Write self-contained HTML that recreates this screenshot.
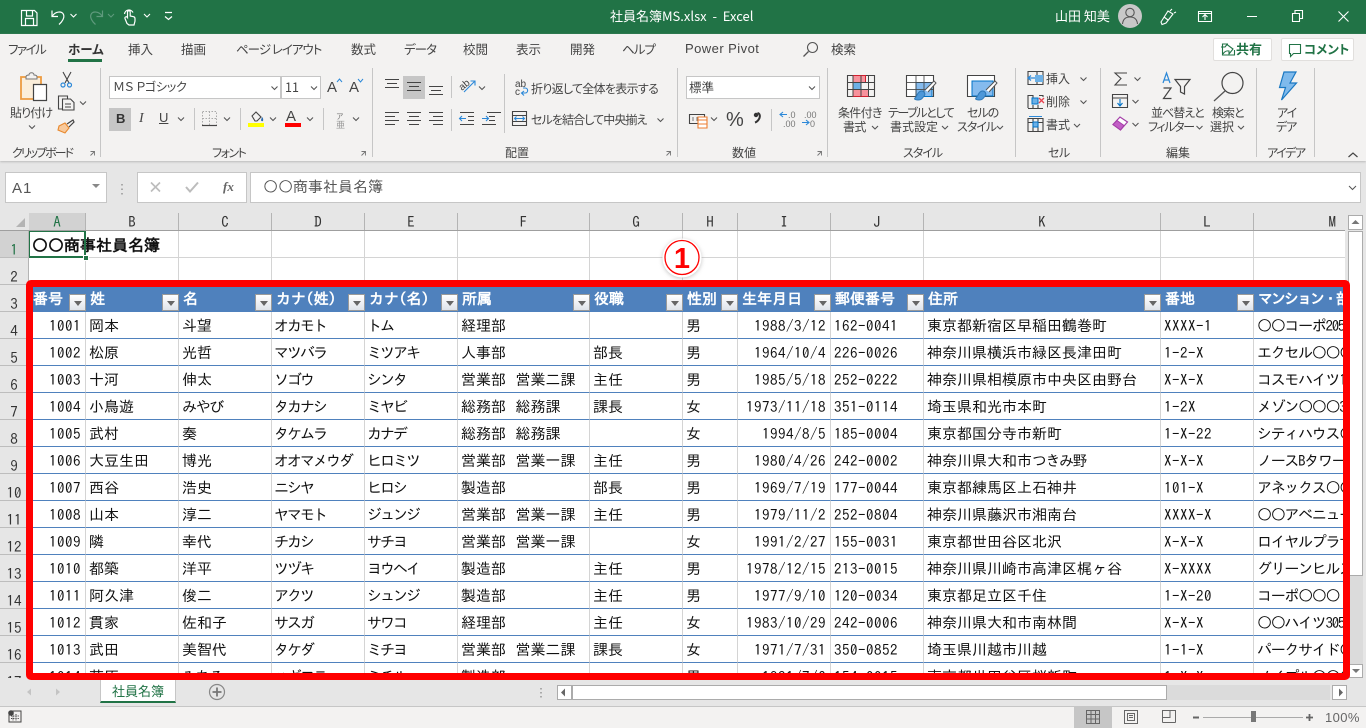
<!DOCTYPE html>
<html lang="ja"><head><meta charset="utf-8"><title>社員名簿MS.xlsx - Excel</title>
<style>
html,body{margin:0;padding:0;width:1366px;height:728px;overflow:hidden;background:#e6e6e6}
*{box-sizing:border-box}
body{position:relative;font-family:"Noto Sans CJK JP","Liberation Sans",sans-serif}
.b{position:absolute}
.t{position:absolute;white-space:nowrap;font-size:12px;line-height:16px;color:#444;font-feature-settings:"palt"}
.w{color:#fff}
.g{color:#555}
.c{text-align:center}
.s{position:absolute;width:1px;background:#c6c6c6}
.ch{position:absolute;top:213px;height:18px;font:15px/18px "IPAGothic",monospace;color:#333;text-align:center;border-right:1px solid #b4b4b4}
.rh{position:absolute;left:0;width:29px;height:27px;font:15px/17px "IPAGothic",monospace;color:#333;text-align:center;border-bottom:1px solid #bdbdbd;padding-top:10px;border-right:1px solid #b4b4b4}
#grid{position:absolute;left:29px;top:231px;width:1316px;height:447px;overflow:hidden;background:#fff}
table{border-collapse:separate;border-spacing:0;table-layout:fixed;width:1317px;font:15px/24px "IPAGothic",monospace;color:#111}
td{height:27px;padding:2px 3px 0;border-right:1px solid #d4d4d4;border-bottom:1px solid #d4d4d4;overflow:hidden;white-space:nowrap;position:relative;vertical-align:top}
tr.d td{border-bottom-color:#4f81bd}
tr.h td{background:#4f81bd;color:#fff;font-weight:bold;border-right:0;border-bottom:0;line-height:26px;padding:1px 3px 0 4px}
tr.h td i{position:absolute;right:0;bottom:1px;width:17px;height:17px;background:linear-gradient(#fff,#dfe3ea);border:1px solid #9a9a9a}
tr.h td i:after{content:"";position:absolute;left:4px;top:6px;border:4px solid transparent;border-top:5px solid #666;border-bottom:0}
.r{text-align:right;padding-right:4px;letter-spacing:.5px}
.z{letter-spacing:.5px}
.k{letter-spacing:-2px;padding-left:2px}
.m{letter-spacing:-1.3px}
tr.h td.y{letter-spacing:-2px}
.n{word-spacing:2px}
</style></head><body>

<!-- title bar -->
<div class="b" style="left:0;top:0;width:1366px;height:34px;background:#217346"></div>
<!-- ribbon -->
<div class="b" style="left:0;top:34px;width:1366px;height:127px;background:#f3f2f1;box-shadow:0 1px 2px #bbb"></div>

<div class="t w" style="left:610px;top:8px;font-size:13px;letter-spacing:0">社員名簿MS.xlsx&nbsp; -&nbsp; Excel</div>
<div class="t w" style="left:1055px;top:8px;font-size:13px">山田 知美</div>

<!-- tabs -->
<div class="t" style="left:8px;top:41px;font-size:12.5px;letter-spacing:-1.5px">ファイル</div>
<div class="t" style="left:68px;top:41px;font-size:12.5px;font-weight:bold;color:#333">ホーム</div>
<div class="b" style="left:68px;top:59px;width:34px;height:3px;background:#217346"></div>
<div class="t" style="left:128px;top:41px;font-size:12.5px">挿入</div>
<div class="t" style="left:181px;top:41px;font-size:12.5px">描画</div>
<div class="t" style="left:236px;top:41px;font-size:12.5px;letter-spacing:-1px">ページ レイアウト</div>
<div class="t" style="left:351px;top:41px;font-size:12.5px">数式</div>
<div class="t" style="left:404px;top:41px;font-size:12.5px;letter-spacing:-1px">データ</div>
<div class="t" style="left:463px;top:41px;font-size:12.5px">校閲</div>
<div class="t" style="left:516px;top:41px;font-size:12.5px">表示</div>
<div class="t" style="left:570px;top:41px;font-size:12.5px">開発</div>
<div class="t" style="left:622px;top:41px;font-size:12.5px;letter-spacing:-1px">ヘルプ</div>
<div class="t" style="left:685px;top:41px;font:13px/16px 'Liberation Sans',sans-serif;letter-spacing:.45px;color:#444">Power Pivot</div>
<div class="t" style="left:831px;top:41px;font-size:12.5px">検索</div>

<div class="b" style="left:1213px;top:38px;width:59px;height:23px;background:#fff;border:1px solid #e1dfdd;border-radius:2px"></div>
<div class="t" style="left:1236px;top:41px;font-size:13px;font-weight:bold;color:#217346">共有</div>
<div class="b" style="left:1281px;top:38px;width:73px;height:23px;background:#fff;border:1px solid #e1dfdd;border-radius:2px"></div>
<div class="t" style="left:1304px;top:41px;font-size:12.5px;font-weight:bold;color:#217346">コメント</div>

<!-- group separators -->
<div class="s" style="left:100px;top:68px;height:89px"></div>
<div class="s" style="left:372px;top:68px;height:89px"></div>
<div class="s" style="left:677px;top:68px;height:89px"></div>
<div class="s" style="left:827px;top:68px;height:89px"></div>
<div class="s" style="left:1015px;top:68px;height:89px"></div>
<div class="s" style="left:1100px;top:68px;height:89px"></div>
<div class="s" style="left:1256px;top:68px;height:89px"></div>
<div class="s" style="left:1314px;top:68px;height:89px"></div>
<div class="s" style="left:194px;top:108px;height:22px"></div>
<div class="s" style="left:240px;top:108px;height:22px"></div>
<div class="s" style="left:323px;top:108px;height:22px"></div>
<div class="s" style="left:451px;top:76px;height:22px"></div>
<div class="s" style="left:451px;top:109px;height:22px"></div>
<div class="s" style="left:504px;top:74px;height:59px"></div>
<div class="s" style="left:771px;top:109px;height:22px"></div>

<!-- group labels -->
<div class="t" style="left:12px;top:145px;letter-spacing:-2px">クリップボード</div>
<div class="t" style="left:212px;top:145px;letter-spacing:-1.5px">フォント</div>
<div class="t" style="left:505px;top:145px">配置</div>
<div class="t" style="left:732px;top:145px">数値</div>
<div class="t" style="left:903px;top:145px;letter-spacing:-1px">スタイル</div>
<div class="t" style="left:1048px;top:145px;letter-spacing:-.5px">セル</div>
<div class="t" style="left:1166px;top:145px">編集</div>
<div class="t" style="left:1267px;top:145px;letter-spacing:-1.5px">アイデア</div>

<!-- clipboard label -->
<div class="t" style="left:10px;top:105px;letter-spacing:-.9px">貼り付け</div>

<!-- font controls -->
<div class="b" style="left:109px;top:76px;width:172px;height:23px;background:#fff;border:1px solid #c6c6c6"></div>
<div class="b" style="left:281px;top:76px;width:40px;height:23px;background:#fff;border:1px solid #c6c6c6"></div>
<div class="t" style="left:113px;top:79px;font-size:12px;color:#444;letter-spacing:-.2px">ＭＳ Ｐゴシック</div>
<div class="t" style="left:285px;top:79px;font-size:12.5px">11</div>
<div class="b" style="left:109px;top:108px;width:22px;height:23px;background:#c6c6c6"></div>
<div class="t" style="left:116px;top:111px;font:bold 13px/16px 'Liberation Sans',sans-serif;color:#333">B</div>
<div class="t" style="left:139px;top:111px;font:italic 14px/16px 'Liberation Serif',serif;color:#444">I</div>
<div class="t" style="left:159px;top:110px;font:13px/16px 'Liberation Sans',sans-serif;color:#444;text-decoration:underline">U</div>
<div class="t" style="left:327px;top:79px;font:15px/18px 'Liberation Sans',sans-serif;color:#444">A</div>
<div class="t" style="left:349px;top:79px;font:15px/18px 'Liberation Sans',sans-serif;color:#444">A</div>
<div class="t" style="left:286px;top:108px;font:15px/18px 'Liberation Sans',sans-serif;color:#444">A</div>

<!-- alignment labels -->
<div class="b" style="left:403px;top:76px;width:22px;height:23px;background:#c6c6c6"></div>
<div class="t" style="left:531px;top:81px;font-size:12px;letter-spacing:-.7px">折り返して全体を表示する</div>
<div class="t" style="left:531px;top:112px;font-size:12px;letter-spacing:-.9px">セルを結合して中央揃え</div>

<!-- number -->
<div class="b" style="left:686px;top:76px;width:134px;height:23px;background:#fff;border:1px solid #c6c6c6"></div>
<div class="t" style="left:689px;top:79px;font-size:12.5px">標準</div>
<div class="t" style="left:726px;top:108px;font:20px/24px 'Liberation Sans',sans-serif;color:#444">%</div>

<!-- styles labels -->
<div class="t" style="left:838px;top:105px;letter-spacing:-.7px">条件付き</div>
<div class="t" style="left:843px;top:119px;letter-spacing:-.6px">書式</div>
<div class="t" style="left:888px;top:105px;letter-spacing:-1.4px">テーブルとして</div>
<div class="t" style="left:890px;top:119px">書式設定</div>
<div class="t" style="left:967px;top:105px;letter-spacing:-1px">セルの</div>
<div class="t" style="left:957px;top:119px;letter-spacing:-1px">スタイル</div>

<!-- cells labels -->
<div class="t" style="left:1046px;top:71px">挿入</div>
<div class="t" style="left:1046px;top:94px">削除</div>
<div class="t" style="left:1046px;top:117px">書式</div>

<!-- editing labels -->
<div class="t" style="left:1151px;top:105px;letter-spacing:-1px">並べ替えと</div>
<div class="t" style="left:1148px;top:119px;letter-spacing:-1.4px">フィルター</div>
<div class="t" style="left:1212px;top:105px;letter-spacing:-1px">検索と</div>
<div class="t" style="left:1210px;top:119px">選択</div>
<div class="t" style="left:1277px;top:105px;letter-spacing:-1px">アイ</div>
<div class="t" style="left:1276px;top:119px;letter-spacing:-1px">デア</div>

<!-- formula bar -->
<div class="b" style="left:5px;top:172px;width:102px;height:31px;background:#fff;border:1px solid #c6c6c6"></div>
<div class="t" style="left:12px;top:180px;font:15px/18px 'Liberation Sans',sans-serif;color:#555;letter-spacing:1px">A1</div>
<div class="b" style="left:137px;top:172px;width:110px;height:31px;background:#fff;border:1px solid #c6c6c6"></div>
<div class="b" style="left:250px;top:172px;width:1111px;height:31px;background:#fff;border:1px solid #c6c6c6"></div>
<div class="t" style="left:263px;top:178px;font:15px/18px 'IPAGothic',monospace;color:#555">○○商事社員名簿</div>
<div class="t" style="left:223px;top:178px;font:italic bold 13px/18px 'Liberation Serif',serif;color:#666">fx</div>

<!-- column headers -->
<div class="b" style="left:0;top:213px;width:1345px;height:18px;background:#e6e6e6"></div>
<div class="ch" style="left:29px;width:57px;background:#d2d2d2;color:#217346">A</div>
<div class="ch" style="left:86px;width:93px">B</div>
<div class="ch" style="left:179px;width:93px">C</div>
<div class="ch" style="left:272px;width:93px">D</div>
<div class="ch" style="left:365px;width:93px">E</div>
<div class="ch" style="left:458px;width:132px">F</div>
<div class="ch" style="left:590px;width:93px">G</div>
<div class="ch" style="left:683px;width:55px">H</div>
<div class="ch" style="left:738px;width:93px">I</div>
<div class="ch" style="left:831px;width:93px">J</div>
<div class="ch" style="left:924px;width:237px">K</div>
<div class="ch" style="left:1161px;width:93px">L</div>
<div class="ch" style="left:1254px;width:91px;border-right:0;text-align:right;padding-right:9px">M</div>
<div class="b" style="left:0;top:230px;width:1345px;height:1px;background:#9f9f9f"></div>

<!-- row headers -->
<div class="rh" style="top:231px;background:#d2d2d2;color:#217346">1</div>
<div class="rh" style="top:258px">2</div>
<div class="rh" style="top:285px">3</div>
<div class="rh" style="top:312px">4</div>
<div class="rh" style="top:339px">5</div>
<div class="rh" style="top:366px">6</div>
<div class="rh" style="top:393px">7</div>
<div class="rh" style="top:420px">8</div>
<div class="rh" style="top:447px">9</div>
<div class="rh" style="top:474px">10</div>
<div class="rh" style="top:501px">11</div>
<div class="rh" style="top:528px">12</div>
<div class="rh" style="top:555px">13</div>
<div class="rh" style="top:582px">14</div>
<div class="rh" style="top:609px">15</div>
<div class="rh" style="top:636px">16</div>
<div class="b" style="left:0;top:663px;width:29px;height:15px;border-right:1px solid #b4b4b4;overflow:hidden;font:15px/17px 'IPAGothic',monospace;color:#333;text-align:center;padding-top:10px">17</div>

<!-- grid -->
<div id="grid">
<table>
<colgroup><col style="width:57px"><col style="width:93px"><col style="width:93px"><col style="width:93px"><col style="width:93px"><col style="width:132px"><col style="width:93px"><col style="width:55px"><col style="width:93px"><col style="width:93px"><col style="width:237px"><col style="width:93px"><col style="width:92px"></colgroup>
<tr><td></td><td></td><td></td><td></td><td></td><td></td><td></td><td></td><td></td><td></td><td></td><td></td><td></td></tr>
<tr><td></td><td></td><td></td><td></td><td></td><td></td><td></td><td></td><td></td><td></td><td></td><td></td><td></td></tr>
<tr class="h"><td>番号<i></i></td><td>姓<i></i></td><td>名<i></i></td><td>カナ(姓)<i></i></td><td>カナ(名)<i></i></td><td>所属<i></i></td><td>役職<i></i></td><td>性別<i></i></td><td>生年月日<i></i></td><td>郵便番号<i></i></td><td>住所<i></i></td><td>番地<i></i></td><td class="y">マンション・部</td></tr>
<tr class="d"><td class="r">1001</td><td>岡本</td><td>斗望</td><td class="k">オカモト</td><td class="k">トム</td><td>経理部</td><td></td><td>男</td><td class="r">1988/3/12</td><td class="z">162-0041</td><td>東京都新宿区早稲田鶴巻町</td><td class="z">XXXX-1</td><td class="m">○○コーポ205</td></tr>
<tr class="d"><td class="r">1002</td><td>松原</td><td>光哲</td><td class="k">マツバラ</td><td class="k">ミツアキ</td><td>人事部</td><td>部長</td><td>男</td><td class="r">1964/10/4</td><td class="z">226-0026</td><td>神奈川県横浜市緑区長津田町</td><td class="z">1-2-X</td><td class="m">エクセル○○○</td></tr>
<tr class="d"><td class="r">1003</td><td>十河</td><td>伸太</td><td class="k">ソゴウ</td><td class="k">シンタ</td><td class="n">営業部 営業二課</td><td>主任</td><td>男</td><td class="r">1985/5/18</td><td class="z">252-0222</td><td>神奈川県相模原市中央区由野台</td><td class="z">X-X-X</td><td class="m">コスモハイツ1</td></tr>
<tr class="d"><td class="r">1004</td><td>小鳥遊</td><td class="m">みやび</td><td class="k">タカナシ</td><td class="k">ミヤビ</td><td class="n">総務部 総務課</td><td>課長</td><td>女</td><td class="r">1973/11/18</td><td class="z">351-0114</td><td>埼玉県和光市本町</td><td class="z">1-2X</td><td class="m">メゾン○○○3</td></tr>
<tr class="d"><td class="r">1005</td><td>武村</td><td>奏</td><td class="k">タケムラ</td><td class="k">カナデ</td><td class="n">総務部 総務課</td><td></td><td>女</td><td class="r">1994/8/5</td><td class="z">185-0004</td><td>東京都国分寺市新町</td><td class="z">1-X-22</td><td class="m">シティハウス○</td></tr>
<tr class="d"><td class="r">1006</td><td>大豆生田</td><td>博光</td><td class="k">オオマメウダ</td><td class="k">ヒロミツ</td><td class="n">営業部 営業一課</td><td>主任</td><td>男</td><td class="r">1980/4/26</td><td class="z">242-0002</td><td>神奈川県大和市<span style="letter-spacing:-1.5px">つきみ</span>野</td><td class="z">X-X-X</td><td class="m">ノースBタワー</td></tr>
<tr class="d"><td class="r">1007</td><td>西谷</td><td>浩史</td><td class="k">ニシヤ</td><td class="k">ヒロシ</td><td>製造部</td><td>部長</td><td>男</td><td class="r">1969/7/19</td><td class="z">177-0044</td><td>東京都練馬区上石神井</td><td class="z">101-X</td><td class="m">アネックス○○</td></tr>
<tr class="d"><td class="r">1008</td><td>山本</td><td>淳二</td><td class="k">ヤマモト</td><td class="k">ジュンジ</td><td class="n">営業部 営業一課</td><td>主任</td><td>男</td><td class="r">1979/11/2</td><td class="z">252-0804</td><td>神奈川県藤沢市湘南台</td><td class="z">XXXX-X</td><td class="m">○○アベニュー</td></tr>
<tr class="d"><td class="r">1009</td><td>隣</td><td>幸代</td><td class="k">チカシ</td><td class="k">サチヨ</td><td class="n">営業部 営業一課</td><td></td><td>女</td><td class="r">1991/2/27</td><td class="z">155-0031</td><td>東京都世田谷区北沢</td><td class="z">X-X-X</td><td class="m">ロイヤルプラザ</td></tr>
<tr class="d"><td class="r">1010</td><td>都築</td><td>洋平</td><td class="k">ツヅキ</td><td class="k">ヨウヘイ</td><td>製造部</td><td>主任</td><td>男</td><td class="r">1978/12/15</td><td class="z">213-0015</td><td>神奈川県川崎市高津区梶ヶ谷</td><td class="z">X-XXXX</td><td class="m">グリーンヒルズ</td></tr>
<tr class="d"><td class="r">1011</td><td>阿久津</td><td>俊二</td><td class="k">アクツ</td><td class="k">シュンジ</td><td>製造部</td><td>主任</td><td>男</td><td class="r">1977/9/10</td><td class="z">120-0034</td><td>東京都足立区千住</td><td class="z">1-X-20</td><td class="m">コーポ○○○</td></tr>
<tr class="d"><td class="r">1012</td><td>貫家</td><td>佐和子</td><td class="k">サスガ</td><td class="k">サワコ</td><td>経理部</td><td>主任</td><td>女</td><td class="r">1983/10/29</td><td class="z">242-0006</td><td>神奈川県大和市南林間</td><td class="z">X-X-X</td><td class="m">○○ハイツ305</td></tr>
<tr class="d"><td class="r">1013</td><td>武田</td><td>美智代</td><td class="k">タケダ</td><td class="k">ミチヨ</td><td class="n">営業部 営業二課</td><td>課長</td><td>女</td><td class="r">1971/7/31</td><td class="z">350-0852</td><td>埼玉県川越市川越</td><td class="z">1-1-X</td><td class="m">パークサイド○</td></tr>
<tr class="d"><td class="r">1014</td><td>荻原</td><td class="m">みちる</td><td class="k">ハギワラ</td><td class="k">ミチル</td><td>製造部</td><td></td><td>男</td><td class="r">1981/7/6</td><td class="z">154-0015</td><td>東京都世田谷区桜新町</td><td class="z">1-X-X</td><td class="m">メイプル○○○</td></tr>
</table>
<div class="t" style="left:3px;top:5px;font:bold 16px/18px 'IPAGothic',monospace;color:#111">○○商事社員名簿</div>
<div class="b" style="left:-1px;top:-1px;width:58px;height:28px;border:2px solid #217346"></div>
<div class="b" style="left:54px;top:24px;width:6px;height:6px;background:#217346;border:1px solid #fff"></div>
</div>

<!-- vertical scrollbar -->
<div class="b" style="left:1348px;top:215px;width:15px;height:15px;background:#fff;border:1px solid #ababab"></div>
<div class="b" style="left:1348px;top:231px;width:15px;height:345px;background:#fff;border:1px solid #ababab"></div>
<div class="b" style="left:1349px;top:576px;width:14px;height:88px;background:#dbdbdb"></div>
<div class="b" style="left:1349px;top:664px;width:14px;height:14px;background:#fff;border:1px solid #ababab"></div>

<!-- sheet tabs bar -->
<div class="b" style="left:0;top:678px;width:1366px;height:28px;background:#e6e6e6"></div>
<div class="b" style="left:100px;top:678px;width:76px;height:25px;background:#fff;border:1px solid #c6c6c6;border-top:0;border-bottom:2px solid #217346"></div>
<div class="t" style="left:112px;top:683px;font:13px/16px 'Noto Sans CJK JP',sans-serif;color:#217346;font-feature-settings:normal">社員名簿</div>
<div class="b" style="left:557px;top:685px;width:15px;height:15px;background:#fff;border:1px solid #ababab"></div>
<div class="b" style="left:572px;top:685px;width:595px;height:15px;background:#fff;border:1px solid #ababab"></div>
<div class="b" style="left:1167px;top:685px;width:163px;height:15px;background:#dbdbdb"></div>
<div class="b" style="left:1332px;top:685px;width:15px;height:15px;background:#fff;border:1px solid #ababab"></div>

<!-- status bar -->
<div class="b" style="left:0;top:706px;width:1366px;height:22px;background:#f3f2f1;border-top:1px solid #c6c6c6"></div>
<div class="b" style="left:1074px;top:707px;width:38px;height:21px;background:#c6c6c6"></div>
<div class="t" style="left:1325px;top:709px;font:13px/18px 'Liberation Sans',sans-serif;color:#666;letter-spacing:.4px">100%</div>

<!-- icons -->
<svg class="b" style="left:0;top:0" width="1366" height="728" viewBox="0 0 1366 728" fill="none">
<defs>
<path id="ch" d="M-3-1.5l3 3 3-3" stroke="#555" stroke-width="1.1"/>
<path id="cw" d="M-3-1.5l3 3 3-3" stroke="#fff" stroke-width="1.1"/>
<path id="la" d="M.5.5h4v4M4.500.5l-4 4" stroke="#777" stroke-width=".9"/>
</defs>
<!-- QAT -->
<g stroke="#fff" stroke-width="1.2">
<path d="M21.500 10.500h13l2.500 2.500v12.500h-15.500z"/><path d="M26.500 10.500v5.500h6v-5.500M25.500 25.500v-7h8v7"/>
<path d="M52 10.500v6h6M52.500 16c3-5 9.500-5 11-1.500 1.200 3-1 7-4.500 10"/>
<path d="M124.500 14a4.500 4.500 0 0 1 8.500-1.500M127 23.500l-2-5c-.5-1.500 1.500-2.500 2.500-1V12c0-1.700 2.700-1.700 2.700 0v4l3.300.7c1 .2 1.500 1 1.500 2v2.300l-1 4h-5z"/>
<path d="M165 12.500h7M165 16.500l3.500 3 3.500-3"/>
</g>
<path d="M102.500 10.500v6h-6M102 16c-3-5-9.500-5-11-1.500-1.200 3 1 7 4.500 10" stroke="#5f9a7d" stroke-width="1.200"/>
<use href="#cw" x="73.500" y="15.500"/><use href="#cw" x="147" y="15.500"/>
<path d="M108 14l3 3 3-3" stroke="#5f9a7d"/>
<!-- window controls -->
<circle cx="1130" cy="16" r="12" fill="#c8c8c8"/>
<circle cx="1130" cy="12.500" r="4.200" stroke="#555" stroke-width="1.100"/><path d="M1122.500 24c.5-5 3-7 7.500-7s7 2 7.500 7" stroke="#555" stroke-width="1.100"/>
<g stroke="#fff" stroke-width="1.100">
<path d="M1161 22l7-11 5 3-7 9-4 1.500zM1170 11l2-2M1174 13l2-1M1164 17l4 3"/>
<path d="M1198.500 11.500h13v10h-13zM1198.500 13.500h13M1205 20v-5M1202.500 17l2.500-2.500 2.500 2.500"/>
<path d="M1247 16.500h10M1292.500 13.500h7v8h-7zM1295 13v-2.500h7.500v8h-3M1338.500 11.500l10 10M1348.500 11.500l-10 10"/>
</g>
<!-- tabs search -->
<circle cx="812.500" cy="47.500" r="5" stroke="#555" stroke-width="1.100"/><path d="M808.500 51.500l-5 5" stroke="#555" stroke-width="1.300"/>
<path d="M1221 47h4l2-2.500 6 4.500-4 5v-3c-3-.5-4.500.5-6 3M1228 44h-5.500v11h12v-5" stroke="#217346" stroke-width="1.100"/>
<path d="M1289.500 44.500h11v9h-7l-3 3v-3h-1z" stroke="#217346" stroke-width="1.100"/>
<!-- clipboard group -->
<path d="M21 77h20v22H21z" fill="#fbeeda" stroke="#ed9b40" stroke-width="1.800"/>
<path d="M26 77c0-2 2-2 3-2 0-3 5-3 5 0 1 0 3 0 3 2v2H26z" fill="#f3f2f1" stroke="#777"/>
<path d="M33.500 84.500h13v16h-13z" fill="#fff" stroke="#444" stroke-width="1.200"/>
<use href="#ch" x="32" y="127"/>
<path d="M63 72l6 11M71 72l-6 11" stroke="#444" stroke-width="1.100"/><circle cx="63" cy="85" r="2" stroke="#2b88d8" stroke-width="1.200"/><circle cx="69.500" cy="85" r="2" stroke="#2b88d8" stroke-width="1.200"/>
<path d="M58.500 96h9v13h-9z" stroke="#444" stroke-width="1.100"/><path d="M62.500 99h8l3.500 3.500V110h-11.500z" fill="#f3f2f1" stroke="#444" stroke-width="1.100"/><path d="M65 104h6M65 107h6" stroke="#444"/>
<use href="#ch" x="83" y="103"/>
<path d="M59 126l6-3 4 5-4 5-7-3z" fill="#f8c99b" stroke="#e8892f" stroke-width="1.100"/><path d="M67 124l6-4 1 2-5 5" stroke="#444" stroke-width="1.200"/>
<use href="#la" x="90" y="151"/><use href="#la" x="361" y="151"/><use href="#la" x="666" y="151"/><use href="#la" x="817" y="151"/>
<!-- font controls -->
<use href="#ch" x="274.500" y="88"/><use href="#ch" x="314" y="88"/>
<path d="M337 83l2.500-3 2.500 3" stroke="#2b88d8" transform="translate(0 -1)"/><path d="M358 79l2.500 3 2.500-3" stroke="#2b88d8"/>
<use href="#ch" x="181" y="119"/><use href="#ch" x="227" y="119"/><use href="#ch" x="273" y="119"/><use href="#ch" x="310" y="119"/><use href="#ch" x="356" y="119"/>
<path d="M202.500 111.500h14v14h-14zM209.500 111.500v14M202.500 118.500h14" stroke="#aaa" stroke-dasharray="1.500 1.500"/><path d="M202 125.500h15" stroke="#444" stroke-width="1.200"/>
<path d="M252 116l4-4 5 5-4 4h-2z" stroke="#444" stroke-width="1.100"/><path d="M262 117c1 1 1.500 2 1 4-1 .5-2 0-2-1z" fill="#2b6cb0"/>
<path d="M248 123h16v4h-16z" fill="#ffff00"/>
<path d="M285 123h16v4h-16z" fill="#ff0000"/>
<text x="336" y="119" font-family="Noto Sans CJK JP" font-size="7.500" fill="#777">ア</text>
<text x="336" y="128" font-family="Noto Sans CJK JP" font-size="9" fill="#999">亜</text>
<!-- alignment -->
<g stroke="#444" stroke-width="1.100">
<path d="M385 79.500h14M387 83.500h10M385 87.500h14"/>
<path d="M407 82.500h14M409 86.500h10M407 90.500h14"/>
<path d="M429 86.500h14M431 90.500h10M429 94.500h14"/>
<path d="M385 112.500h14M385 116.500h10M385 120.500h14M385 124.500h10"/>
<path d="M407 112.500h14M409 116.500h10M407 120.500h14M409 124.500h10"/>
<path d="M429 112.500h14M433 116.500h10M429 120.500h14M433 124.500h10"/>
<path d="M460 112.500h14M468 116.500h6M468 120.500h6M460 124.500h14M487 112.500h14M482 124.500h14M489 116.500h6M489 120.500h6"/>
</g>
<path d="M460 118.500h6M462 116l-2.500 2.500 2.500 2.500M482 118.500h6M486 116l2.500 2.500-2.500 2.500" stroke="#2b88d8" stroke-width="1.100"/>
<text transform="translate(462 91) rotate(-40)" font-family="Liberation Sans" font-size="10" fill="#444">ab</text>
<path d="M464 92l11-11M470.500 81h4.500v4.500" stroke="#2b88d8" stroke-width="1.100"/>
<use href="#ch" x="482" y="88"/>
<!-- wrap / merge -->
<text x="515" y="87" font-family="Liberation Sans" font-size="10" fill="#444">ab</text>
<text x="515" y="95" font-family="Liberation Sans" font-size="10" fill="#444">c</text>
<path d="M522 93h3c3.500 0 3.500-5 0-5h-2M524 91l-2.500 2 2.500 2.500" stroke="#2b88d8" stroke-width="1.100"/>
<path d="M512.500 111.500h14v14h-14zM512.500 115.500h14M512.500 121.500h14" stroke="#444" stroke-width="1.100"/>
<path d="M514.500 118.500h10M516.500 116.500l-2 2 2 2M522.500 116.500l2 2-2 2" stroke="#2b88d8"/>
<use href="#ch" x="660.500" y="120"/>
<!-- number -->
<use href="#ch" x="812" y="88"/><use href="#ch" x="714" y="119"/>
<path d="M689.500 114.500h15v9h-15z" stroke="#444" stroke-width="1.100"/>
<path d="M693 117v4M697 117v4" stroke="#777"/>
<path d="M698 117h9v11h-9z" fill="#fff" stroke="#ed7d31" stroke-width="1.100"/><path d="M698 120h9M698 124h9" stroke="#ed7d31"/>
<path d="M757.500 113c2.500.5 3 3.500 1.500 6-1 1.800-2.500 3-4 3.500" stroke="#333" stroke-width="2"/><circle cx="756" cy="115" r="2.200" fill="#333"/>
<path d="M780 114.500h7M783 112l-3 2.500 3 2.500M802 122.500h7M806 120l3 2.500-3 2.500" stroke="#2b88d8" stroke-width="1.100"/>
<g font-family="Liberation Sans" font-size="9" fill="#777"><text x="788" y="118">.0</text><text x="783" y="127">.00</text><text x="804" y="118">.00</text><text x="810" y="127">0</text></g>
<!-- conditional format -->
<path d="M847.500 75.500h27v21h-27z" stroke="#444" stroke-width="1.100"/>
<path d="M853 75.500h12.500v7H853z" fill="#f7929c" stroke="#d2202f"/><path d="M853 89.500h15.500v7H853z" fill="#f7929c" stroke="#d2202f"/><path d="M853 82.500h8v7h-8z" fill="#6cb0e6" stroke="#0072c6"/>
<path d="M847.500 82.500h27M847.500 89.500h27M853 75.500v21M861 75.500v21M868.500 75.500v21" stroke="#444"/>
<!-- table format -->
<path d="M906.500 75.500h27v21h-27z" fill="#fff" stroke="#444" stroke-width="1.100"/>
<path d="M916 82.500h16v14h-16z" fill="#85bbee" stroke="#0072c6"/>
<path d="M906.500 82.500h27M906.500 89.500h27M916 75.500v21M924 75.500v21" stroke="#444" stroke-opacity=".85"/>
<path d="M925 90l9-9 2 2-8 9" fill="#fff" stroke="#555"/><path d="M918 100c-3 0-4-1-3-2 2-1 2-6 6-7 3-.5 5 3 3 5-2 3-3 4-6 4z" fill="#4d97d8" stroke="#2f79b8"/>
<!-- cell style -->
<path d="M967.500 75.500h27v21h-27z" fill="#fff" stroke="#444" stroke-width="1.100"/>
<path d="M972 81h21v15h-21z" fill="#85bbee" stroke="#0072c6"/>
<path d="M986 90l9-9 2 2-8 9" fill="#fff" stroke="#555"/><path d="M979 100c-3 0-4-1-3-2 2-1 2-6 6-7 3-.5 5 3 3 5-2 3-3 4-6 4z" fill="#4d97d8" stroke="#2f79b8"/>
<use href="#ch" x="875" y="127.500"/><use href="#ch" x="945" y="127.500"/><use href="#ch" x="1000" y="127.500"/>
<!-- cells -->
<g stroke="#444" stroke-width="1.100">
<path d="M1028 71.500h15v13h-15zM1028 78h15M1037 71.500v13"/>
<path d="M1028 95.500h5M1039 95.500h4M1028 108.500h15M1028 95v13M1043 95v2M1033 95v3M1033 105v3M1038 105v3"/>
<path d="M1028 118.500h15v13h-15zM1028 122.500h15M1033 118.500v13M1038 118.500v13"/>
</g>
<path d="M1035 75h8v7h-8z" fill="#6cb0e6"/><path d="M1035 78h-7M1031 75.500l-3 2.500 3 2.500" stroke="#2b88d8" stroke-width="1.200"/>
<path d="M1032 98h6v6h-6z" fill="#6cb0e6" stroke="#0072c6"/><path d="M1039 98l5 5M1044 98l-5 5" stroke="#e8414e" stroke-width="1.300"/>
<path d="M1033 122h5v5h-5z" fill="#6cb0e6" stroke="#0072c6"/><path d="M1029 116.500h13" stroke="#2b88d8"/>
<use href="#ch" x="1083.500" y="79"/><use href="#ch" x="1083.500" y="102"/><use href="#ch" x="1077" y="125.500"/>
<!-- editing -->
<path d="M1127 73h-12l6 5.500-6 6.500h12" stroke="#444" stroke-width="1.100"/>
<use href="#ch" x="1137.500" y="79"/><use href="#ch" x="1135.500" y="101.500"/><use href="#ch" x="1135.500" y="124.500"/>
<path d="M1112.500 94.500h15v13h-15zM1112.500 98h15" stroke="#444" stroke-width="1.100"/>
<path d="M1120 99v6.500M1117.500 103l2.500 3 2.500-3" stroke="#0072c6" stroke-width="1.100"/>
<path d="M1113 124.500l7-7.500 7.500 5-7 8z" fill="#fff" stroke="#a43fa8" stroke-width="1.200"/><path d="M1113 124.500l4-4 7 5-3.500 4.500z" fill="#c25fc6" stroke="#a43fa8"/>
<path d="M1163 83l3.500-10 3.500 10M1164.500 80h4" stroke="#2b88d8" stroke-width="1.200"/>
<path d="M1163.500 88h7.500l-7.500 10.500h8" stroke="#444" stroke-width="1.200"/>
<path d="M1175 79.500h15l-5.500 7v7.500l-4-2v-5.500z" stroke="#444" stroke-width="1.200"/>
<circle cx="1232.500" cy="83" r="10.500" stroke="#444" stroke-width="1.200"/><path d="M1225 91l-11 10" stroke="#555" stroke-width="1.300"/>
<use href="#ch" x="1199.500" y="127.500"/><use href="#ch" x="1241" y="127.500"/>
<path d="M1284 72h12l-6 11h6.500l-15 17 4-12.500h-6z" fill="#7fbaec" stroke="#1a78c2" stroke-width="1.200"/>
<path d="M1348.500 157l4.500-4 4.500 4" stroke="#444" stroke-width="1.200"/>
<!-- formula bar -->
<path d="M92 184h8l-4 4z" fill="#888"/>
<path d="M122 184v1.500M122 188.500v1.500M122 193v1.500" stroke="#aaa" stroke-width="2"/>
<path d="M151 182.500l9 9M160 182.500l-9 9" stroke="#bcbcbc" stroke-width="1.600"/>
<path d="M186 187l4 4.500 8-9" stroke="#bcbcbc" stroke-width="2"/>
<path d="M1349 186l3.500 3.500 3.500-3.500" stroke="#555"/>
<path d="M25 218v9h-9z" fill="#b4b4b4"/>
<!-- scrollbar arrows -->
<path d="M1355.500 220l-4 4h8z" fill="#777"/><path d="M1356 673l-4-4h8z" fill="#777"/>
<path d="M561 692.500l4-4v8z" fill="#666"/><path d="M1343 692.500l-4-4v8z" fill="#666"/>
<path d="M27 692l4-3.500v7z" fill="#c4c4c4"/><path d="M60 692l-4-3.500v7z" fill="#c4c4c4"/>
<circle cx="217" cy="692" r="7.500" stroke="#888" stroke-width="1.200"/><path d="M212.500 692h9M217 687.500v9" stroke="#777" stroke-width="1.800"/>
<path d="M541 688v1.500M541 692v1.500M541 696v1.500" stroke="#aaa" stroke-width="2"/>
<!-- status -->
<circle cx="11" cy="713" r="2.800" fill="#444"/>
<path d="M10 711h11v11H9v-8" stroke="#444"/><path d="M11 716h8M11 718.500h8M13 714v7M16 714v7" stroke="#444" stroke-dasharray="1.200 1"/>
<path d="M1086.500 710.500h13v13h-13zM1086.500 714.500h13M1086.500 719h13M1091 710.500v13M1095.500 710.500v13" stroke="#666"/>
<path d="M1124.500 710.500h13v13h-13zM1127.500 713.500h7v7h-7zM1129 715.500h4M1129 717.500h4" stroke="#666"/>
<path d="M1162.500 722.500v-12h13v12M1162.500 722.500h13M1170 710.500v7h-7.500" stroke="#666"/>
<path d="M1193 717.500h6" stroke="#666" stroke-width="2"/>
<path d="M1203 717.500h100" stroke="#aaa"/>
<path d="M1251 711h5v11h-5z" fill="#777"/>
<path d="M1306 717.500h7M1309.500 714v7" stroke="#666" stroke-width="1.800"/>
</svg>

<!-- red highlight + callout -->
<div class="b" style="left:26px;top:280px;width:1324px;height:400px;border:7px solid #ff0000;border-radius:5px"></div>
<svg class="b" style="left:650px;top:226px" width="64" height="64" viewBox="0 0 64 64">
<defs><filter id="f" x="-30%" y="-30%" width="160%" height="160%"><feGaussianBlur stdDeviation="2"/></filter></defs>
<circle cx="32" cy="33" r="19.500" fill="#999" opacity=".55" filter="url(#f)"/>
<circle cx="32" cy="32" r="19.500" fill="#fff"/>
<circle cx="32" cy="31.500" r="17" fill="#fff" stroke="#ff0000" stroke-width="1.300"/>
<text x="32" y="42" text-anchor="middle" font-family="Liberation Sans" font-weight="bold" font-size="29" fill="#ff0000">1</text>
</svg>
</body></html>
